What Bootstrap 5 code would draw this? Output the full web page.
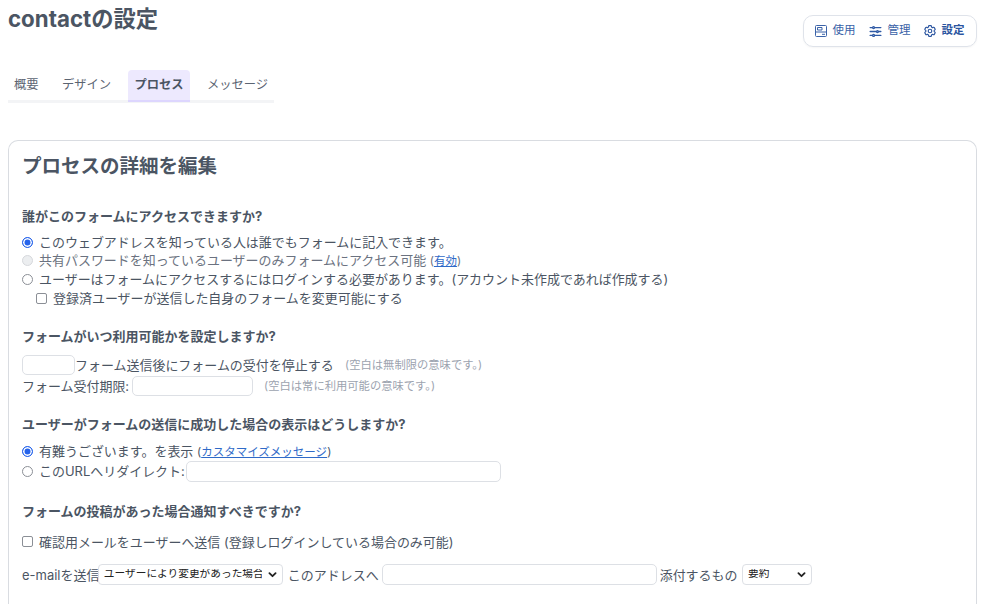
<!DOCTYPE html>
<html lang="ja">
<head>
<meta charset="utf-8">
<title>contactの設定</title>
<link href="https://cdn.jsdelivr.net/npm/bootstrap@5.3.0/dist/css/bootstrap.min.css" rel="stylesheet">
<style>
html,body{height:604px;overflow:hidden}
body{font-family:Inter,"Noto Sans CJK JP",sans-serif;color:#4b5563;background:#fff;font-size:12.97px;line-height:18px;padding:0 7px 0 8px}
.page-top{height:47px;align-items:flex-start}
.page-title{font-size:22.3px;font-weight:700;line-height:28px;margin:5px 0 0;color:#4b5563}
.action-box{margin:15px 0 0 0;width:174px;height:32px;border:1px solid #dfe3ea;border-radius:10px;padding:0 11px;gap:13.500px;font-size:11.5px;box-shadow:0 1px 2px rgba(0,0,0,.04)}
.action-box a{color:#3b63a8;text-decoration:none;display:flex;align-items:center;gap:5.500px;line-height:1;white-space:nowrap}
.action-box a.on{font-weight:700;color:#2b55a0}
.tab-strip{margin-top:23px;width:266px;height:33px;border-bottom:3px solid #f3f4f6;flex-wrap:nowrap}
.tab-strip .nav-link{color:#5b6472;font-size:12.3px;line-height:16px;padding:7px 6px 0;height:32px;margin-right:11.300px;border-radius:4px 4px 0 0;white-space:nowrap}
.tab-strip .nav-link.active{background:#ede9fe;border-bottom:2px solid #ddd6fe;color:#4b5563;font-weight:700}
.form-panel{margin-top:37px;border:1px solid #d9dce1;border-bottom:0;border-radius:10px 10px 0 0;padding:13px 13px 0;height:464px;overflow:hidden}
.panel-head{font-size:19.5px;font-weight:700;line-height:24px;margin:0 0 29px;color:#4b5563}
.group-head{font-size:13px;font-weight:700;line-height:18px;margin:0 0 8px;color:#4b5563}
.head-b{margin-bottom:9px}
.head-c{margin-bottom:9px}
.head-d{margin-bottom:12px}
.opt-row{display:flex;align-items:center;height:18.6px}
.opt-row .form-check-input{width:11px;height:11px;margin:0 6px 0 0;border-color:#8b8f96;flex:none}
.opt-row .form-check-input[type=checkbox]{border-radius:2px}
.opt-row .form-check-input[type=radio]:checked{background:#2563eb;border-color:#2563eb;box-shadow:inset 0 0 0 1.5px #fff}
.opt-row .form-check-input:disabled{opacity:1;border-color:#d6d8dc;background:#eceef0}
.opt-row .muted-text{color:#6b7280}
.opt-row.nested{padding-left:14px}
.opt-row.tall{height:21px}
.form-panel a{color:#2f6ac8;font-size:11.5px}
.paren{font-size:11.5px}
.sect-a{margin-bottom:20px}
.sect-b{margin-bottom:19px}
.sect-c{margin-bottom:20.500px}
.hint{font-size:11.3px;color:#9ca3af;margin-left:11.500px}
.fld{height:20.500px;border:1px solid #dde0e5;border-radius:5px;padding:0 4px;background:#fff;flex:none;outline:0}
.w-count{width:53px}
.w-date{width:121px;margin-left:2.500px}
.w-url{width:315px;margin-left:1px}
.w-mail{width:275px;margin:0 3px}
.line-row{display:flex;align-items:center;height:21px}
.mail-row{margin-top:13px;white-space:nowrap}
.sel{--bs-form-select-bg-img:url("data:image/svg+xml,%3csvg xmlns='http://www.w3.org/2000/svg' viewBox='0 0 16 16'%3e%3cpath fill='none' stroke='%23222' stroke-linecap='round' stroke-linejoin='round' stroke-width='3.200' d='m2.500 5.500 5.500 5.500 5.500-5.500'/%3e%3c/svg%3e");height:20.500px;border:1px solid #dde0e5;border-radius:4px;font-size:10.7px;color:#222;font-family:inherit;padding:0 20px 0 5px;background-position:right 5px center;background-size:9px;line-height:1;flex:none}
.s-when{width:185px;margin-left:-1.500px}
.s-att{width:70px;margin-left:4.500px}
.addr-label{margin-left:5px}
</style>
</head>
<body>
<div class="d-flex justify-content-between page-top">
  <h1 class="page-title">contactの設定</h1>
  <div class="d-flex align-items-center action-box">
    <a href="#"><svg width="12" height="12" viewBox="0 0 12 12" fill="none" stroke="#3b63a8" stroke-width="1"><rect x=".5" y=".5" width="11" height="11" rx="1"/><path d="M2.500 2.500h4.500v2.500h-4.500zM.5 7h11M7 9.300h3"/></svg>使用</a>
    <a href="#"><svg width="13" height="13" viewBox="2 2 20 20" fill="none" stroke="#2f5aa5" stroke-width="2" stroke-linecap="round"><path d="M10.500 6h9.750M10.500 6a1.500 1.500 0 1 1-3 0m3 0a1.500 1.500 0 1 0-3 0M3.750 6H7.500m3 12h9.750m-9.750 0a1.500 1.500 0 0 1-3 0m3 0a1.500 1.500 0 0 0-3 0m-3.750 0H7.500m9-6h3.750m-3.750 0a1.500 1.500 0 0 1-3 0m3 0a1.500 1.500 0 0 0-3 0m-9.750 0h9.750"/></svg>管理</a>
    <a href="#" class="on"><svg width="12" height="12" viewBox="2 2 20 20" fill="none" stroke="#2b55a0" stroke-width="1.900"><path d="M9.594 3.940c.09-.542.56-.94 1.110-.94h2.593c.55 0 1.020.398 1.110.94l.213 1.281c.063.374.313.686.645.87.074.04.147.083.22.127.325.196.72.257 1.075.124l1.217-.456a1.125 1.125 0 0 1 1.370.49l1.296 2.247a1.125 1.125 0 0 1-.26 1.431l-1.003.827c-.293.241-.438.613-.43.992a7.723 7.723 0 0 1 0 .255c-.008.378.137.75.43.991l1.004.827c.424.35.534.955.26 1.430l-1.298 2.247a1.125 1.125 0 0 1-1.369.491l-1.217-.456c-.355-.133-.75-.072-1.076.124a6.470 6.470 0 0 1-.22.128c-.331.183-.581.495-.644.869l-.213 1.281c-.09.543-.56.94-1.110.94h-2.594c-.55 0-1.019-.398-1.110-.94l-.213-1.281c-.062-.374-.312-.686-.644-.87a6.520 6.520 0 0 1-.22-.127c-.325-.196-.72-.257-1.076-.124l-1.217.456a1.125 1.125 0 0 1-1.369-.49l-1.297-2.247a1.125 1.125 0 0 1 .26-1.431l1.004-.827c.292-.24.437-.613.43-.991a6.932 6.932 0 0 1 0-.255c.007-.38-.138-.751-.43-.992l-1.004-.827a1.125 1.125 0 0 1-.26-1.430l1.297-2.247a1.125 1.125 0 0 1 1.370-.491l1.216.456c.356.133.751.072 1.076-.124.072-.044.146-.086.22-.128.332-.183.582-.495.644-.869l.214-1.280Z"/><circle cx="12" cy="12" r="3"/></svg>設定</a>
  </div>
</div>
<ul class="nav tab-strip">
  <li class="nav-item"><a class="nav-link" href="#">概要</a></li>
  <li class="nav-item"><a class="nav-link" href="#">デザイン</a></li>
  <li class="nav-item"><a class="nav-link active" href="#">プロセス</a></li>
  <li class="nav-item"><a class="nav-link" href="#">メッセージ</a></li>
</ul>
<div class="form-panel">
  <h2 class="panel-head">プロセスの詳細を編集</h2>
  <div class="sect-a">
    <h3 class="group-head">誰がこのフォームにアクセスできますか?</h3>
    <div class="opt-row"><input class="form-check-input" type="radio" name="a" checked><span>このウェブアドレスを知っている人は誰でもフォームに記入できます。</span></div>
    <div class="opt-row"><input class="form-check-input" type="radio" name="a" disabled><span class="muted-text">共有パスワードを知っているユーザーのみフォームにアクセス可能 <span class="paren">(<a href="#">有効</a>)</span></span></div>
    <div class="opt-row"><input class="form-check-input" type="radio" name="a"><span>ユーザーはフォームにアクセスするにはログインする必要があります。(アカウント未作成であれば作成する)</span></div>
    <div class="opt-row nested"><input class="form-check-input" type="checkbox"><span>登録済ユーザーが送信した自身のフォームを変更可能にする</span></div>
  </div>
  <div class="sect-b">
    <h3 class="group-head head-b">フォームがいつ利用可能かを設定しますか?</h3>
    <div class="line-row"><input class="fld w-count" type="text"><span>フォーム送信後にフォームの受付を停止する</span><span class="hint">(空白は無制限の意味です。)</span></div>
    <div class="line-row"><span>フォーム受付期限:</span><input class="fld w-date" type="text"><span class="hint">(空白は常に利用可能の意味です。)</span></div>
  </div>
  <div class="sect-c">
    <h3 class="group-head head-c">ユーザーがフォームの送信に成功した場合の表示はどうしますか?</h3>
    <div class="opt-row"><input class="form-check-input" type="radio" name="b" checked><span>有難うございます。を表示 <span class="paren">(<a href="#">カスタマイズメッセージ</a>)</span></span></div>
    <div class="opt-row tall"><input class="form-check-input" type="radio" name="b"><span>このURLへリダイレクト:</span><input class="fld w-url" type="text"></div>
  </div>
  <div>
    <h3 class="group-head head-d">フォームの投稿があった場合通知すべきですか?</h3>
    <div class="opt-row"><input class="form-check-input" type="checkbox"><span>確認用メールをユーザーへ送信 (登録しログインしている場合のみ可能)</span></div>
    <div class="line-row mail-row"><span>e-mailを送信</span><select class="form-select sel s-when"><option>ユーザーにより変更があった場合</option></select><span class="addr-label">このアドレスへ</span><input class="fld w-mail" type="text"><span>添付するもの</span><select class="form-select sel s-att"><option>要約</option></select></div>
  </div>
</div>
<script src="https://cdn.jsdelivr.net/npm/bootstrap@5.3.0/dist/js/bootstrap.bundle.min.js"></script>
</body>
</html>
